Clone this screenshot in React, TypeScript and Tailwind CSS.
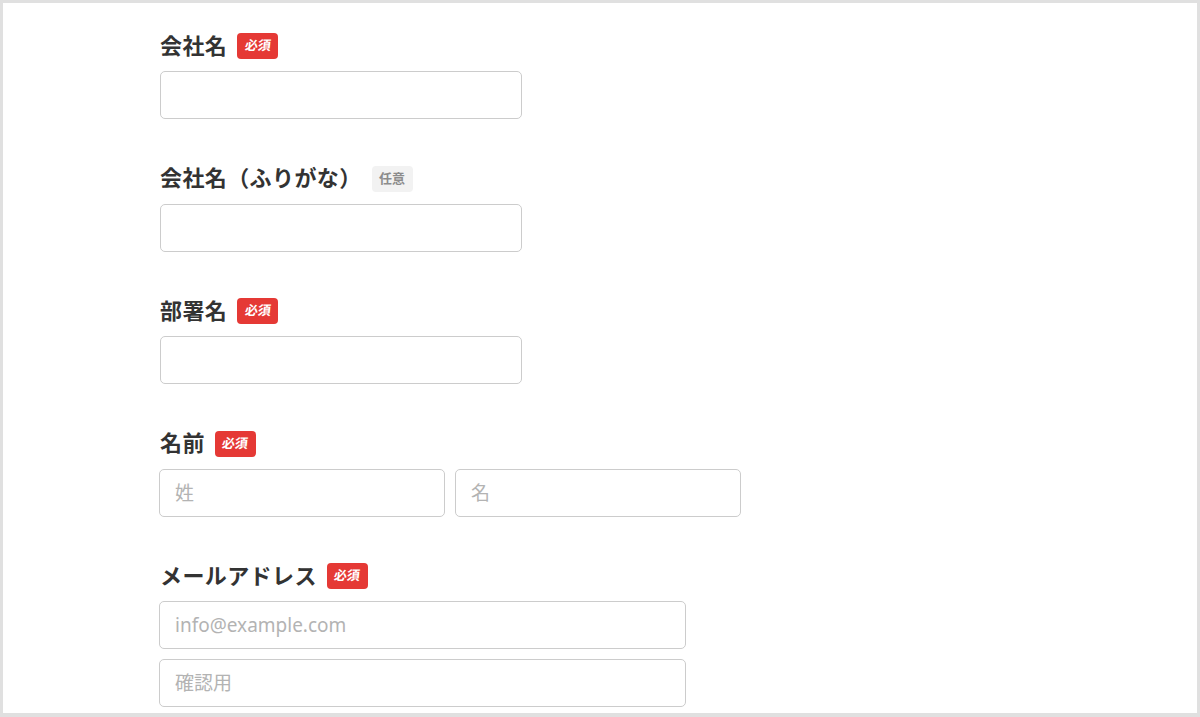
import React from 'react';

const font = { fontFamily: '"Noto Sans", "Noto Sans CJK JP", sans-serif' };

function Badge({ required }: { required: boolean }) {
  return required ? (
    <span className="ml-[10px] inline-flex h-[26px] w-[41px] items-center justify-center rounded-[4px] bg-[#e53935] text-[13px] font-bold text-white">
      <span className="inline-block -skew-x-6">必須</span>
    </span>
  ) : (
    <span className="ml-[10px] inline-flex h-[26px] w-[41px] items-center justify-center rounded-[4px] bg-[#f2f2f2] text-[13px] font-bold text-[#8c8c8c]">
      任意
    </span>
  );
}

function Label({ text, required }: { text: string; required: boolean }) {
  return (
    <div className="mb-[12px] flex h-[26px] items-center">
      <span className="mb-[3px] text-[22px] font-bold leading-none tracking-[0.4px] text-[#333]">{text}</span>
      <Badge required={required} />
    </div>
  );
}

const inputCls =
  'h-[48px] rounded-[5px] border-[1.5px] border-[#cccccc] bg-white px-[15px] text-[19px] text-[#333] outline-none placeholder:text-[#b3b3b3]';

export default function App() {
  return (
    <div className="h-[717px] w-[1200px] bg-[#e0e0e0] p-[3px] pb-[4px]" style={font}>
      <div className="h-full w-full overflow-hidden bg-white pl-[157px] pt-[30px]">
        <div className="mb-[46.5px]">
          <Label text="会社名" required />
          <input className={`${inputCls} w-[362px]`} />
        </div>
        <div className="mb-[46.5px]">
          <Label text="会社名（ふりがな）" required={false} />
          <input className={`${inputCls} w-[362px]`} />
        </div>
        <div className="mb-[46.5px]">
          <Label text="部署名" required />
          <input className={`${inputCls} w-[362px]`} />
        </div>
        <div className="mb-[46.5px]">
          <Label text="名前" required />
          <div className="-ml-px flex gap-[10px]">
            <input className={`${inputCls} w-[286px]`} placeholder="姓" />
            <input className={`${inputCls} w-[286px]`} placeholder="名" />
          </div>
        </div>
        <div>
          <Label text="メールアドレス" required />
          <div className="-ml-px flex flex-col gap-[10px]">
            <input className={`${inputCls} w-[527px]`} placeholder="info@example.com" />
            <input className={`${inputCls} w-[527px]`} placeholder="確認用" />
          </div>
        </div>
      </div>
    </div>
  );
}
